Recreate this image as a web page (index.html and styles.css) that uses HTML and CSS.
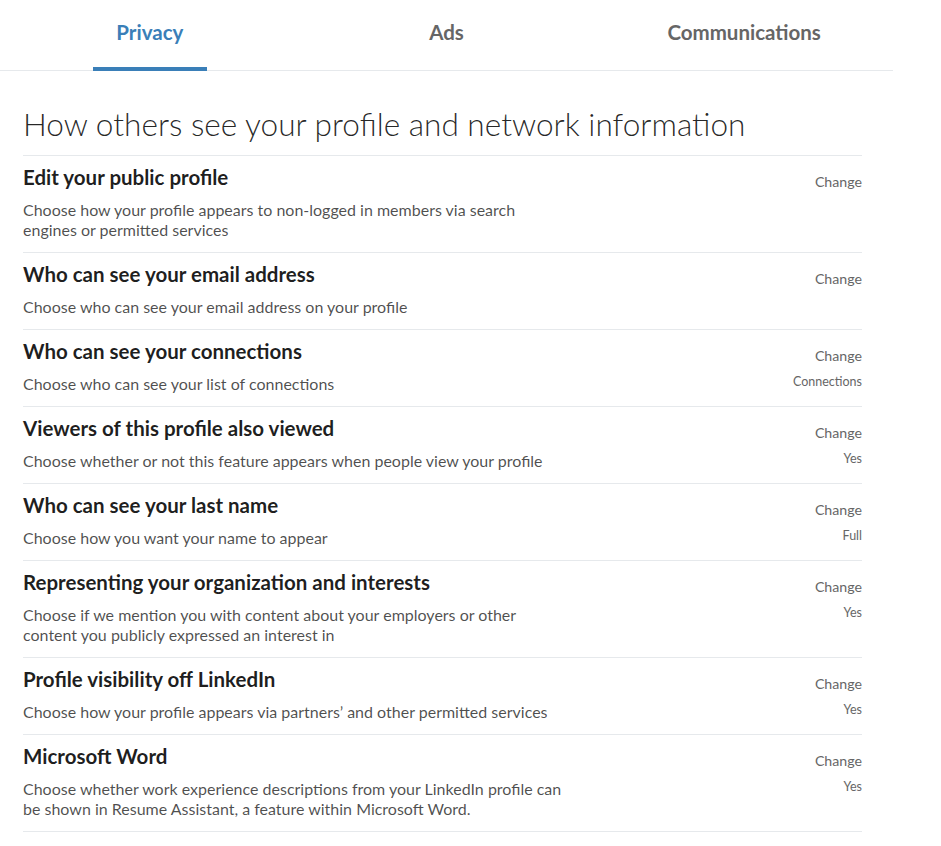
FILE: index.html
```html
<!DOCTYPE html>
<html lang="en">
<head>
<meta charset="utf-8">
<title>Privacy settings</title>
<link rel="stylesheet" href="styles.css">
</head>
<body>
<div class="page">
  <nav class="tabs">
    <a class="tab active">Privacy</a>
    <a class="tab">Ads</a>
    <a class="tab">Communications</a>
  </nav>
  <section class="section">
    <h1 class="section-title">How others see your profile and network information</h1>
    <ul class="settings">
      <li class="setting">
        <div class="setting-main">
          <h3 class="setting-name">Edit your public profile</h3>
          <p class="setting-desc">Choose how your profile appears to non-logged in members via search engines or permitted services</p>
        </div>
        <div class="setting-side"><span class="change">Change</span></div>
      </li>
      <li class="setting">
        <div class="setting-main">
          <h3 class="setting-name">Who can see your email address</h3>
          <p class="setting-desc">Choose who can see your email address on your profile</p>
        </div>
        <div class="setting-side"><span class="change">Change</span></div>
      </li>
      <li class="setting">
        <div class="setting-main">
          <h3 class="setting-name">Who can see your connections</h3>
          <p class="setting-desc">Choose who can see your list of connections</p>
        </div>
        <div class="setting-side"><span class="change">Change</span><span class="value">Connections</span></div>
      </li>
      <li class="setting">
        <div class="setting-main">
          <h3 class="setting-name">Viewers of this profile also viewed</h3>
          <p class="setting-desc">Choose whether or not this feature appears when people view your profile</p>
        </div>
        <div class="setting-side"><span class="change">Change</span><span class="value">Yes</span></div>
      </li>
      <li class="setting">
        <div class="setting-main">
          <h3 class="setting-name">Who can see your last name</h3>
          <p class="setting-desc">Choose how you want your name to appear</p>
        </div>
        <div class="setting-side"><span class="change">Change</span><span class="value">Full</span></div>
      </li>
      <li class="setting">
        <div class="setting-main">
          <h3 class="setting-name">Representing your organization and interests</h3>
          <p class="setting-desc">Choose if we mention you with content about your employers or other content you publicly expressed an interest in</p>
        </div>
        <div class="setting-side"><span class="change">Change</span><span class="value">Yes</span></div>
      </li>
      <li class="setting">
        <div class="setting-main">
          <h3 class="setting-name">Profile visibility off LinkedIn</h3>
          <p class="setting-desc">Choose how your profile appears via partners’ and other permitted services</p>
        </div>
        <div class="setting-side"><span class="change">Change</span><span class="value">Yes</span></div>
      </li>
      <li class="setting">
        <div class="setting-main">
          <h3 class="setting-name">Microsoft Word</h3>
          <p class="setting-desc">Choose whether work experience descriptions from your LinkedIn profile can be shown in Resume Assistant, a feature within Microsoft Word.</p>
        </div>
        <div class="setting-side"><span class="change">Change</span><span class="value">Yes</span></div>
      </li>
    </ul>
  </section>
</div>
</body>
</html>
```

FILE: styles.css
```css
* { box-sizing: border-box; }
html, body { margin: 0; padding: 0; background: #fff; }
body {
  font-family: "Lato", "Noto Sans", "Liberation Sans", sans-serif;
  color: rgba(0,0,0,0.9);
}
.page { width: 893px; }
.tabs {
  display: grid;
  grid-template-columns: repeat(3, 1fr);
  height: 71px;
  border-bottom: 1px solid #e6e9ec;
}
.tab {
  display: flex;
  justify-content: center;
  align-items: flex-start;
  padding-top: 20px;
  font-size: 20.5px;
  font-weight: 700;
  color: #666;
}
.tab.active {
  color: #3a7fb8;
  position: relative;
  padding-left: 2px;
}
.tab.active::after {
  content: "";
  position: absolute;
  left: 50%;
  bottom: -1px;
  width: 114px;
  margin-left: -56px;
  height: 4px;
  background: #3a7fb8;
}
.section { padding: 0 31px 0 23px; }
.section-title {
  margin: 0;
  padding: 33px 0 0;
  height: 85px;
  font-size: 31.6px;
  font-weight: 300;
  line-height: 40px;
  color: rgba(0,0,0,0.85);
  border-bottom: 1px solid #e6e9ec;
}
.settings { list-style: none; margin: 0; padding: 0; }
.setting {
  display: flex;
  justify-content: space-between;
  border-bottom: 1px solid #e6e9ec;
  padding: 9px 0 12px;
}
.setting-main { width: 545px; }
.setting-name {
  margin: 0;
  font-size: 20.5px;
  font-weight: 700;
  line-height: 24px;
  color: rgba(0,0,0,0.88);
}
.setting-desc {
  margin: 11px 0 0;
  font-size: 16px;
  line-height: 20px;
  color: rgba(0,0,0,0.7);
}
.setting-side {
  display: flex;
  flex-direction: column;
  align-items: flex-end;
  padding-top: 7px;
}
.change {
  font-size: 14.2px;
  line-height: 20px;
  color: #666;
}
.value {
  margin-top: 8px;
  font-size: 12.5px;
  line-height: 16px;
  color: #666;
}
```
